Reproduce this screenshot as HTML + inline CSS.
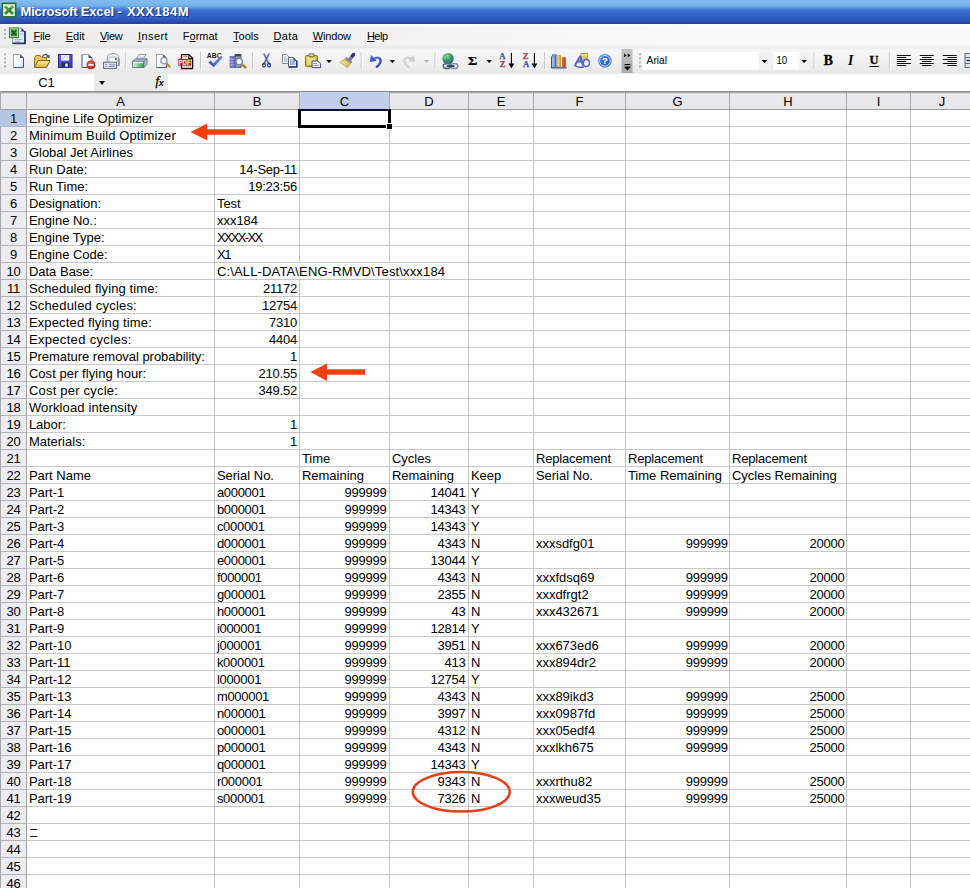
<!DOCTYPE html>
<html lang="en"><head><meta charset="utf-8"><title>Microsoft Excel - XXX184M</title>
<style>

html,body{margin:0;padding:0;}
body{width:970px;height:888px;overflow:hidden;background:#fff;position:relative;
  font-family:"Liberation Sans",sans-serif;color:#000;}
.abs{position:absolute;}
#title{left:0;top:0;width:970px;height:24px;
  background:linear-gradient(to bottom,#80bcee 0px,#78b4ec 5px,#669fe5 7px,#4a82d8 9px,#3a6ccc 11px,#3466c8 13px,#3262c4 17px,#2b52b4 21px,#2646a8 23px,#2442a2 24px);}
#title .t{left:20.5px;top:3px;font-weight:bold;font-size:13px;line-height:17px;color:#fff;white-space:nowrap;
  text-shadow:1px 1px 1px rgba(10,30,100,.7);}
#menu{left:0;top:24px;width:970px;height:24px;background:linear-gradient(to bottom,rgba(255,255,255,.7) 0,rgba(255,255,255,.5) 2px,rgba(255,255,255,0) 4px,rgba(0,0,0,0) 20px,rgba(0,0,0,.035) 23px,rgba(0,0,0,.035) 24px),linear-gradient(to right,#ededed 0,#f0f0f0 300px,#f8f8f8 600px,#fafafa 100%);}
#menu span{position:absolute;top:6px;font-size:11px;line-height:13px;white-space:nowrap;color:#000;}
#menu u{text-decoration:underline;text-underline-offset:1px;}
#tool{left:0;top:48px;width:970px;height:25px;background:linear-gradient(to bottom,#eeeeee 0,#f6f6f6 2px,#f3f3f3 40%,#ececec 80%,#e7e7e7 100%);}
#fbar{left:0;top:73px;width:970px;height:18px;background:#fff;}
#grid{left:0;top:91px;width:970px;height:797px;background:#fff;overflow:hidden;}
.c{position:absolute;height:17px;line-height:17px;font-size:13px;white-space:nowrap;}
.l{text-align:left;}
.r{text-align:right;letter-spacing:-0.23px;}
.n{letter-spacing:-0.3px;}
.rh{position:absolute;left:0.5px;letter-spacing:-0.23px;width:26px;height:17px;line-height:17px;font-size:13px;text-align:center;}
.ch{position:absolute;top:2px;height:17px;line-height:17px;font-size:13px;text-align:center;}
.vl{position:absolute;width:1px;background:#c4c4c4;}

</style></head><body>
<div id="title" class="abs">
<svg class="abs" style="left:1px;top:2px" width="16" height="16" viewBox="0 0 16 16"><rect x="0.5" y="0.5" width="15" height="15.2" fill="#2f6f33"/><rect x="2.2" y="2.2" width="11.6" height="11.8" fill="#e9f4dc"/><path d="M4 4.4 L12 12 M12 4.2 L4 12" stroke="#2f8a30" stroke-width="2.6"/><path d="M4.4 4.2 L8 7.6 M11.6 4 L9.4 6.2" stroke="#5fb45a" stroke-width="1.2"/></svg>
<div class="abs t"><span style="letter-spacing:-.18px">Microsoft Excel</span> - <span style="letter-spacing:.5px;margin-left:1.5px">XXX184M</span></div>
</div>
<div id="menu" class="abs">
<div class="abs" style="left:4px;top:5px;width:2px;height:2px;background:#b4b4b4"></div>
<div class="abs" style="left:4px;top:9px;width:2px;height:2px;background:#b4b4b4"></div>
<div class="abs" style="left:4px;top:13px;width:2px;height:2px;background:#b4b4b4"></div>
<svg class="abs" style="left:8px;top:2px" width="19" height="19" viewBox="8 26 19 19"><path d="M12.5 28.2 H21.6 L25 31.6 V43.2 H12.5 Z" fill="#dfeafa" stroke="#8a98b4" stroke-width="1"/><path d="M25 31 V43.4 H12.6" fill="none" stroke="#2c3a66" stroke-width="1.8"/><path d="M21.4 28 V31.8 H25.2 Z" fill="#2c3a66"/><path d="M19.6 31.5 H22.6 M19.6 34 H23 M15 39.6 H22.6 M15 41.2 H20" stroke="#9cb0d4" stroke-width=".9"/><rect x="9.4" y="28" width="9" height="9.6" fill="#d4efc8" stroke="#3c7a3a" stroke-width="1"/><rect x="10.6" y="29.2" width="6.6" height="7.2" fill="#58a852"/><path d="M11.4 30.4 L16.4 35.4 M16.4 30.2 L11.4 35.4" stroke="#16501a" stroke-width="1.5"/></svg>
<span style="left:33.4px;letter-spacing:-0.18px"><u>F</u>ile</span>
<span style="left:65.8px;letter-spacing:-0.06px"><u>E</u>dit</span>
<span style="left:100px;letter-spacing:-0.35px"><u>V</u>iew</span>
<span style="left:137.9px;letter-spacing:0.44px"><u>I</u>nsert</span>
<span style="left:182.8px;letter-spacing:-0.01px">F<u>o</u>rmat</span>
<span style="left:233.1px;letter-spacing:0.00px"><u>T</u>ools</span>
<span style="left:273.4px;letter-spacing:0.38px"><u>D</u>ata</span>
<span style="left:312.7px;letter-spacing:-0.15px"><u>W</u>indow</span>
<span style="left:366.9px;letter-spacing:-0.48px"><u>H</u>elp</span>
</div>
<div id="tool" class="abs"></div>
<svg class="abs" style="left:0;top:48px" width="970" height="26" viewBox="0 48 970 26" shape-rendering="auto">
<defs>
<linearGradient id="gpage" x1="0" y1="0" x2="1" y2="1"><stop offset="0" stop-color="#ffffff"/><stop offset="0.6" stop-color="#f4f8fd"/><stop offset="1" stop-color="#cfdcf0"/></linearGradient>
<linearGradient id="gfold" x1="0" y1="0" x2="0" y2="1"><stop offset="0" stop-color="#fdeea0"/><stop offset="1" stop-color="#e2ad33"/></linearGradient>
<linearGradient id="gsave" x1="0" y1="0" x2="1" y2="1"><stop offset="0" stop-color="#6668d0"/><stop offset="1" stop-color="#3c3ca6"/></linearGradient>
<radialGradient id="gred" cx="0.4" cy="0.35" r="0.7"><stop offset="0" stop-color="#f07050"/><stop offset="1" stop-color="#b02010"/></radialGradient>
<linearGradient id="ggreen" x1="0" y1="0" x2="1" y2="0"><stop offset="0" stop-color="#e4f2e6"/><stop offset="0.45" stop-color="#8ed096"/><stop offset="1" stop-color="#2e9a40"/></linearGradient>
<linearGradient id="gclip" x1="0" y1="0" x2="1" y2="1"><stop offset="0" stop-color="#f0e070"/><stop offset="0.5" stop-color="#d0b838"/><stop offset="1" stop-color="#9c8414"/></linearGradient>
<radialGradient id="gglobe" cx="0.35" cy="0.3" r="0.8"><stop offset="0" stop-color="#a8f090"/><stop offset="0.45" stop-color="#3aa070"/><stop offset="1" stop-color="#1c5c98"/></radialGradient>
<linearGradient id="gcheck" x1="1" y1="0" x2="0" y2="1"><stop offset="0" stop-color="#8098e0"/><stop offset="1" stop-color="#2846b0"/></linearGradient>
<linearGradient id="gbar1" x1="0" y1="0" x2="1" y2="0"><stop offset="0" stop-color="#b8d8f8"/><stop offset="1" stop-color="#2c54a8"/></linearGradient>
<linearGradient id="gbar2" x1="0" y1="0" x2="1" y2="0"><stop offset="0" stop-color="#fbe870"/><stop offset="1" stop-color="#c89018"/></linearGradient>
<linearGradient id="gbar3" x1="0" y1="0" x2="1" y2="0"><stop offset="0" stop-color="#f88050"/><stop offset="1" stop-color="#c02808"/></linearGradient>
<radialGradient id="ghelp" cx="0.4" cy="0.35" r="0.75"><stop offset="0" stop-color="#4a80e8"/><stop offset="1" stop-color="#1c44a8"/></radialGradient>
<linearGradient id="govf" x1="0" y1="0" x2="0" y2="1"><stop offset="0" stop-color="#c4c4c4"/><stop offset="1" stop-color="#a8a8a8"/></linearGradient>
<linearGradient id="gbrush" x1="0" y1="0" x2="1" y2="1"><stop offset="0" stop-color="#fbf4b4"/><stop offset="1" stop-color="#c8b044"/></linearGradient>
<linearGradient id="gbook" x1="0" y1="0" x2="1" y2="0"><stop offset="0" stop-color="#9090e0"/><stop offset="1" stop-color="#5858b8"/></linearGradient>
<linearGradient id="gundo" x1="0" y1="0" x2="1" y2="1"><stop offset="0" stop-color="#5a80e8"/><stop offset="1" stop-color="#2a3ca8"/></linearGradient>
</defs>
<rect x="4" y="53.5" width="2" height="2" fill="#b2b2b2"/>
<rect x="5.5" y="55" width="1" height="1" fill="#fff" opacity=".8"/>
<rect x="4" y="57.5" width="2" height="2" fill="#b2b2b2"/>
<rect x="5.5" y="59" width="1" height="1" fill="#fff" opacity=".8"/>
<rect x="4" y="61.5" width="2" height="2" fill="#b2b2b2"/>
<rect x="5.5" y="63" width="1" height="1" fill="#fff" opacity=".8"/>
<rect x="4" y="65.5" width="2" height="2" fill="#b2b2b2"/>
<rect x="5.5" y="67" width="1" height="1" fill="#fff" opacity=".8"/>
<path d="M13.5 54.5 H20 L23.5 58 V67.5 H13.5 Z" fill="url(#gpage)" stroke="#4a586e" stroke-width="1" stroke-linejoin="round"/>
<path d="M13.5 54.5 H20" stroke="#9aa4b4" stroke-width="1"/>
<path d="M13.5 54.5 V67.5" stroke="#9aa4b4" stroke-width="1"/>
<path d="M20 54.5 V58 H23.5 Z" fill="#4a586e"/>
<path d="M34.5 57.5 L36 55.5 H40 L41.5 57.5 H46.5 V67 H34.5 Z" fill="#e6c45a" stroke="#96761e" stroke-width="1" stroke-linejoin="round"/>
<path d="M34.5 67.5 L38 60.5 H50 L46.5 67.5 Z" fill="url(#gfold)" stroke="#86661a" stroke-width="1" stroke-linejoin="round"/>
<path d="M42.5 57 C43 54.2 46.5 53.6 48 56" fill="none" stroke="#4c525c" stroke-width="1.3"/>
<path d="M49.6 54.4 L49.4 58.4 L45.8 57 Z" fill="#4c525c"/>
<rect x="58.5" y="54.5" width="13.5" height="13" fill="url(#gsave)" stroke="#2a2a84" stroke-width="1"/>
<rect x="61" y="55" width="8.2" height="5.6" fill="#eef0ff"/>
<path d="M62 59.5 L66.5 55.5" stroke="#c8ccf0" stroke-width="1.5"/>
<rect x="61.5" y="62.5" width="7.5" height="5" fill="#262670"/>
<rect x="65.3" y="63.5" width="2.4" height="3.2" fill="#f4f4ff"/>
<path d="M82 54.5 H88.5 L92 58 V67.5 H82 Z" fill="url(#gpage)" stroke="#4a586e" stroke-width="1" stroke-linejoin="round"/>
<path d="M82 54.5 H88.5" stroke="#9aa4b4" stroke-width="1"/>
<path d="M82 54.5 V67.5" stroke="#9aa4b4" stroke-width="1"/>
<path d="M88.5 54.5 V58 H92 Z" fill="#4a586e"/>
<circle cx="91" cy="64.9" r="4.1" fill="url(#gred)" stroke="#a02818" stroke-width=".6"/>
<rect x="88.4" y="64" width="5.2" height="1.8" rx=".5" fill="#fff"/>
<path d="M107.2 65.5 V58.4 Q107.2 53.6 113 53.6 Q118.8 53.6 118.8 58.4 V65.5 Z" fill="#f6f8fb" stroke="#8e9ab0" stroke-width="1" stroke-linejoin="round"/>
<path d="M109 62 V57.2 H117 V62" fill="#fff" stroke="#a0aabc" stroke-width=".9"/>
<rect x="115" y="58" width="1.8" height="2" fill="#56667e"/>
<path d="M118.9 58.6 V65.8" stroke="#66748c" stroke-width="1.1"/>
<rect x="103.6" y="62.2" width="12.8" height="6.2" fill="#eef2f8" stroke="#5a6880" stroke-width="1"/>
<path d="M105 64.3 H107.4 M105 66.4 H107.4 M108.8 64.3 H115 M108.8 66.4 H115" stroke="#8290a8" stroke-width="1.1"/>
<rect x="124.8" y="52" width="1" height="17" fill="#c6c6c6"/>
<rect x="125.8" y="53" width="1" height="17" fill="#fff" opacity=".7"/>
<path d="M136.4 59 L139 54.6 H146 L143.4 59 Z" fill="#fdfeff" stroke="#7a889c" stroke-width=".9" stroke-linejoin="round"/>
<path d="M139.2 56.6 H144 M138.4 57.8 H143" stroke="#c0c8d6" stroke-width=".7"/>
<path d="M132.6 61.2 L135.8 58.8 H147 V64.4 L144 67.4 H132.6 Z" fill="#b4c0d0" stroke="#66748a" stroke-width=".9" stroke-linejoin="round"/>
<rect x="132.6" y="61.2" width="11.4" height="6.2" fill="url(#ggreen)" stroke="#66748a" stroke-width=".9"/>
<path d="M133.4 62.5 H143.2" stroke="#ffffff" stroke-width="1.3"/>
<path d="M144 61.2 L147 58.8" stroke="#66748a" stroke-width=".9"/>
<path d="M156.5 54.5 H163 L166.5 58 V67.5 H156.5 Z" fill="url(#gpage)" stroke="#4a586e" stroke-width="1" stroke-linejoin="round"/>
<path d="M156.5 54.5 H163" stroke="#9aa4b4" stroke-width="1"/>
<path d="M156.5 54.5 V67.5" stroke="#9aa4b4" stroke-width="1"/>
<path d="M163 54.5 V58 H166.5 Z" fill="#4a586e"/>
<path d="M166.4 63.4 L169.6 66.6" stroke="#b09a3a" stroke-width="2.2" stroke-linecap="round"/>
<circle cx="164" cy="60.8" r="3.1" fill="#eef3fa" stroke="#8e9aac" stroke-width="1.3"/>
<path d="M162.4 60.2 A1.8 1.8 0 0 1 164.4 59" fill="none" stroke="#fff" stroke-width="1"/>
<path d="M181.5 54.6 H189 L192.6 58.2 V68.5 H181.5 Z" fill="#fff" stroke="#141414" stroke-width="1.3" stroke-linejoin="round"/>
<path d="M188.8 54.6 V58.4 H192.6" fill="none" stroke="#141414" stroke-width="1.1"/>
<rect x="183.2" y="55.8" width="4.4" height="1.5" fill="#ee8080"/>
<rect x="183" y="66.4" width="8" height="1.2" fill="#ee9090"/>
<path d="M183.6 67 H190.4" stroke="#fff" stroke-width=".7" stroke-dasharray="1.2 .6"/>
<rect x="178" y="58.8" width="13.2" height="7" rx=".8" fill="#d81e1e"/>
<text x="178.6" y="64.7" font-family="Liberation Sans, sans-serif" font-weight="bold" font-size="6.6" fill="#fff" textLength="12" lengthAdjust="spacingAndGlyphs">PDF</text>
<rect x="200" y="52" width="1" height="17" fill="#c6c6c6"/>
<rect x="201" y="53" width="1" height="17" fill="#fff" opacity=".7"/>
<text x="206.8" y="57.8" font-family="Liberation Sans, sans-serif" font-weight="bold" font-size="6.5" fill="#202020" textLength="14.8" lengthAdjust="spacingAndGlyphs">ABC</text>
<path d="M208.4 62.6 L210.8 60.6 L213.4 63.6 L220.6 55.8 L222.8 57.4 L213.6 67.2 Z" fill="url(#gcheck)"/>
<rect x="235" y="54.5" width="6" height="13" fill="#8e98b0" stroke="#4a5264" stroke-width=".8"/>
<rect x="235" y="54.2" width="6" height="2" fill="#3c4454"/>
<rect x="230" y="56.5" width="5" height="11" fill="url(#gbook)" stroke="#4a4aa0" stroke-width=".6"/>
<path d="M230.3 59.2 H234.7 M230.3 62 H234.7 M230.3 64.8 H234.7" stroke="#b8b8f0" stroke-width=".8"/>
<path d="M241.4 64 L245.4 67.3" stroke="#a08c30" stroke-width="2.6" stroke-linecap="round"/>
<circle cx="239.2" cy="61.6" r="3.2" fill="#f0f4fa" stroke="#7c8898" stroke-width="1.3"/>
<rect x="252" y="52" width="1" height="17" fill="#c6c6c6"/>
<rect x="253" y="53" width="1" height="17" fill="#fff" opacity=".7"/>
<path d="M264 54.2 L268.4 62.6 M268.8 54.2 L264.6 62.6" stroke="#5868ac" stroke-width="1.6" stroke-linecap="round"/>
<ellipse cx="264" cy="65" rx="2.1" ry="2.5" fill="#2c3c9e"/>
<ellipse cx="269" cy="65" rx="2.1" ry="2.5" fill="#2c3c9e"/>
<circle cx="264.1" cy="65.4" r=".8" fill="#fff"/><circle cx="268.9" cy="65.4" r=".8" fill="#fff"/>
<path d="M282.5 54.5 H286.4 L289 57.1 V63.5 H282.5 Z" fill="#fbfcfe" stroke="#7a88a4" stroke-width="1" stroke-linejoin="round"/>
<path d="M284 57 H286.5 M284 59 H287.5 M284 61 H287.5" stroke="#7c90c0" stroke-width=".9"/>
<path d="M288.5 57.5 H293.4 L296.6 60.7 V66.6 H288.5 Z" fill="#fafcff" stroke="#5a6a90" stroke-width="1" stroke-linejoin="round"/>
<path d="M296.8 60.4 V66.9 H288.6" fill="none" stroke="#2a3a68" stroke-width="1.5"/>
<path d="M293.3 57.5 V60.8 H296.6 Z" fill="#36466e"/>
<path d="M290 60 H292.4 M290 62 H295.2 M290 64 H295.2" stroke="#4a6ab8" stroke-width="1"/>
<rect x="305.5" y="55.6" width="12" height="11" rx="1" fill="url(#gclip)" stroke="#8a7812" stroke-width="1"/>
<rect x="307.4" y="57.6" width="8.2" height="7.4" fill="#f2e9a4" opacity=".75"/>
<rect x="309" y="53.8" width="5" height="3" rx=".8" fill="#d8d4c0" stroke="#5c5a48" stroke-width=".9"/>
<path d="M312 61 H317.8 L320.6 63.8 V67.6 H312 Z" fill="#f6f9ff" stroke="#3a4864" stroke-width="1" stroke-linejoin="round"/>
<path d="M313.3 63.4 H317 M313.3 65.4 H319.2" stroke="#6a86c0" stroke-width=".9"/>
<path d="M326.2 60 L331.8 60 L329 63 Z" fill="#000"/>
<path d="M353.4 54.6 L349.4 60" stroke="#7a7ab0" stroke-width="3.6" stroke-linecap="round"/>
<path d="M353.6 54.4 L352.4 56" stroke="#3c3c5c" stroke-width="3.2" stroke-linecap="round"/>
<path d="M346.2 57.4 L352 61.8 L350.6 63.6 L344.8 59.2 Z" fill="#8c8c9c" stroke="#5c5c70" stroke-width=".5"/>
<path d="M344.8 59.2 L350.6 63.6 L347.4 67.8 L339.8 62.2 Z" fill="url(#gbrush)" stroke="#a89838" stroke-width=".6"/>
<path d="M343 61.6 L346.2 59.8 M345 63.4 L348.2 61.8 M346.8 65.2 L349.8 63" stroke="#c8b850" stroke-width=".6"/>
<rect x="360.7" y="52" width="1" height="17" fill="#c6c6c6"/>
<rect x="361.7" y="53" width="1" height="17" fill="#fff" opacity=".7"/>
<path d="M374 59 C378.5 55.5 382 59.5 380 63 C379.2 64.6 378.2 65.8 376.8 66.8" fill="none" stroke="url(#gundo)" stroke-width="2.3" stroke-linecap="round"/>
<path d="M369.8 62 L371 55 L376.8 61 Z" fill="#3c5cd0"/>
<path d="M389.6 60 L395.2 60 L392.4 63 Z" fill="#000"/>
<path d="M411 59 C406.5 55.5 403 59.5 405 63 C405.8 64.6 406.8 65.8 408.2 66.8" fill="none" stroke="#d0d0d0" stroke-width="2.3" stroke-linecap="round"/>
<path d="M415.2 62 L414 55 L408.2 61 Z" fill="#cecece"/>
<path d="M423.7 60 L429.3 60 L426.5 63 Z" fill="#b4b4b4"/>
<rect x="434.5" y="52" width="1" height="17" fill="#c6c6c6"/>
<rect x="435.5" y="53" width="1" height="17" fill="#fff" opacity=".7"/>
<circle cx="448" cy="58.6" r="5.7" fill="url(#gglobe)"/>
<path d="M445 55 C447 56 447.5 58.5 446 60.5 C445 62 446.4 63.2 448.4 63" fill="none" stroke="#2a7c8c" stroke-width="1" opacity=".7"/>
<rect x="443.3" y="63.8" width="7.4" height="4.6" rx="2.3" fill="none" stroke="#5a6882" stroke-width="1.6"/>
<rect x="450.6" y="63.8" width="7.2" height="4.6" rx="2.3" fill="none" stroke="#8490a8" stroke-width="1.6"/>
<path d="M446.8 66.1 H454.4" stroke="#26344e" stroke-width="1.7"/>
<text x="467.7" y="64.6" font-family="Liberation Serif, serif" font-weight="bold" font-size="12.4" fill="#000" stroke="#000" stroke-width=".2" textLength="9.6" lengthAdjust="spacingAndGlyphs">Σ</text>
<path d="M486.4 60 L492 60 L489.2 63 Z" fill="#000"/>
<text x="499.2" y="59.4" font-family="Liberation Serif, serif" font-weight="bold" font-size="8.6" fill="#3c54a4" stroke="#3c54a4" stroke-width=".25">A</text>
<text x="499.8" y="67.4" font-family="Liberation Serif, serif" font-weight="bold" font-size="8.6" fill="#94484a" stroke="#94484a" stroke-width=".25">Z</text>
<path d="M511.4 53 V66" stroke="#000" stroke-width="1.1"/>
<path d="M508.4 63.4 H514.4 L511.4 68.2 Z" fill="#000"/>
<text x="522.8" y="59.4" font-family="Liberation Serif, serif" font-weight="bold" font-size="8.6" fill="#94484a" stroke="#94484a" stroke-width=".25">Z</text>
<text x="523" y="67.4" font-family="Liberation Serif, serif" font-weight="bold" font-size="8.6" fill="#3c54a4" stroke="#3c54a4" stroke-width=".25">A</text>
<path d="M534.4 53 V66" stroke="#000" stroke-width="1.1"/>
<path d="M531.4 63.4 H537.4 L534.4 68.2 Z" fill="#000"/>
<rect x="544" y="52" width="1" height="17" fill="#c6c6c6"/>
<rect x="545" y="53" width="1" height="17" fill="#fff" opacity=".7"/>
<path d="M551.6 57 V67.8 H566.6" fill="none" stroke="#34447e" stroke-width="1.1"/>
<path d="M551.6 57 L553.4 54.4" stroke="#34447e" stroke-width=".9"/>
<path d="M552 68.6 H566" stroke="#8a94b4" stroke-width=".8"/>
<rect x="553" y="54.6" width="3.2" height="12.4" fill="url(#gbar1)" stroke="#3c5ca4" stroke-width=".4"/>
<rect x="557.6" y="55.4" width="3.2" height="11.6" fill="url(#gbar2)" stroke="#a88420" stroke-width=".4"/>
<rect x="562.2" y="57.6" width="3.4" height="9.4" fill="url(#gbar3)" stroke="#a83010" stroke-width=".4"/>
<rect x="581" y="53.6" width="6.6" height="6.2" fill="#dccc54" stroke="#948828" stroke-width=".7"/>
<path d="M581 55.2 H587.6" stroke="#f6eea0" stroke-width="1"/>
<path d="M575.4 64.6 L580.2 56.4 L582.8 64.6 M577.4 61.6 H582" fill="none" stroke="#5862c2" stroke-width="2" stroke-linejoin="round" stroke-linecap="round"/>
<ellipse cx="586.4" cy="63" rx="3" ry="3.4" fill="#fafbff" stroke="#5a66ba" stroke-width="1.5"/>
<path d="M574.2 65.4 C577 67.2 581 67.6 584 66.8" fill="none" stroke="#5a66ba" stroke-width="1.4"/>
<circle cx="604.9" cy="60.8" r="6.7" fill="url(#ghelp)" stroke="#9cbcf0" stroke-width=".8"/>
<circle cx="604.9" cy="60.8" r="5.3" fill="none" stroke="#e8f0ff" stroke-width=".9"/>
<text x="604.9" y="64.2" text-anchor="middle" font-family="Liberation Sans, sans-serif" font-weight="bold" font-size="9.6" fill="#fff">?</text>
<rect x="621.5" y="49" width="11" height="24" fill="url(#govf)"/>
<path d="M624.2 53.6 L626.6 55.4 L624.2 57.2 Z M627.8 53.6 L630.2 55.4 L627.8 57.2 Z" fill="#000"/>
<rect x="624.6" y="64" width="5.8" height="1.1" fill="#000"/>
<path d="M624.2 66.8 H630.8 L627.5 70.4 Z" fill="#000"/>
<path d="M624.8 67.6 H631.4 L628.1 71.2 Z" fill="#fff" opacity=".5"/>
<path d="M624.2 66.8 H630.8 L627.5 70.4 Z" fill="#000"/>
<rect x="639" y="53.5" width="2" height="2" fill="#b2b2b2"/>
<rect x="640.5" y="55" width="1" height="1" fill="#fff" opacity=".8"/>
<rect x="639" y="57.5" width="2" height="2" fill="#b2b2b2"/>
<rect x="640.5" y="59" width="1" height="1" fill="#fff" opacity=".8"/>
<rect x="639" y="61.5" width="2" height="2" fill="#b2b2b2"/>
<rect x="640.5" y="63" width="1" height="1" fill="#fff" opacity=".8"/>
<rect x="639" y="65.5" width="2" height="2" fill="#b2b2b2"/>
<rect x="640.5" y="67" width="1" height="1" fill="#fff" opacity=".8"/>
<rect x="643" y="52" width="116" height="18" fill="#fff"/>
<rect x="759" y="52" width="12" height="18" fill="#f1f1f1"/>
<text x="646.6" y="63.6" font-family="Liberation Sans, sans-serif" font-size="11" fill="#000" textLength="20.4" lengthAdjust="spacingAndGlyphs">Arial</text>
<path d="M761.6 60 L767.2 60 L764.4 63 Z" fill="#000"/>
<rect x="773.5" y="52" width="26" height="18" fill="#fff"/>
<rect x="799.5" y="52" width="11" height="18" fill="#f1f1f1"/>
<text x="776.4" y="63.6" font-family="Liberation Sans, sans-serif" font-size="11" fill="#000" textLength="10.8" lengthAdjust="spacingAndGlyphs">10</text>
<path d="M801.4 60 L807 60 L804.2 63 Z" fill="#000"/>
<rect x="813.5" y="52" width="1" height="17" fill="#c6c6c6"/>
<rect x="814.5" y="53" width="1" height="17" fill="#fff" opacity=".7"/>
<text x="823.8" y="64.7" font-family="Liberation Serif, serif" font-weight="bold" font-size="13.6" fill="#000" stroke="#000" stroke-width=".3" textLength="9.2" lengthAdjust="spacingAndGlyphs">B</text>
<text x="848" y="64.7" font-family="Liberation Serif, serif" font-weight="bold" font-style="italic" font-size="13.6" fill="#000">I</text>
<text x="869.6" y="64.2" font-family="Liberation Serif, serif" font-weight="bold" font-size="12.5" fill="#000" stroke="#000" stroke-width=".3">U</text>
<rect x="869.6" y="66" width="9.6" height="1" fill="#000"/>
<rect x="888.8" y="52" width="1" height="17" fill="#c6c6c6"/>
<rect x="889.8" y="53" width="1" height="17" fill="#fff" opacity=".7"/>
<rect x="896.8" y="55" width="14" height="1" fill="#111"/>
<rect x="896.8" y="57" width="9.4" height="1" fill="#111"/>
<rect x="896.8" y="59" width="14" height="1" fill="#111"/>
<rect x="896.8" y="61" width="9.4" height="1" fill="#111"/>
<rect x="896.8" y="63" width="14" height="1" fill="#111"/>
<rect x="896.8" y="65" width="9.4" height="1" fill="#111"/>
<rect x="919.8" y="55" width="14" height="1" fill="#111"/>
<rect x="922.1" y="57" width="9.4" height="1" fill="#111"/>
<rect x="919.8" y="59" width="14" height="1" fill="#111"/>
<rect x="922.1" y="61" width="9.4" height="1" fill="#111"/>
<rect x="919.8" y="63" width="14" height="1" fill="#111"/>
<rect x="922.1" y="65" width="9.4" height="1" fill="#111"/>
<rect x="942.8" y="55" width="14" height="1" fill="#111"/>
<rect x="947.4" y="57" width="9.4" height="1" fill="#111"/>
<rect x="942.8" y="59" width="14" height="1" fill="#111"/>
<rect x="947.4" y="61" width="9.4" height="1" fill="#111"/>
<rect x="942.8" y="63" width="14" height="1" fill="#111"/>
<rect x="947.4" y="65" width="9.4" height="1" fill="#111"/>
<rect x="965" y="53.5" width="8" height="14" fill="#dce8f8" stroke="#5c6c8c" stroke-width="1"/>
<path d="M965 57.5 H973 M965 63.5 H973" stroke="#5c6c8c" stroke-width="1"/>
<path d="M966.5 60.5 H973" stroke="#222" stroke-width="1.2"/>
</svg>
<div id="fbar" class="abs">
<div class="abs" style="left:0;top:0;width:970px;height:1px;background:#ececec"></div>
<div class="abs" style="left:0;top:1px;width:93px;height:17px;line-height:17px;font-size:13px;text-align:center;">C1</div>
<div class="abs" style="left:93.5px;top:0;width:74.3px;height:18px;background:#ebebeb"></div>
<div class="abs" style="left:98.8px;top:8px;width:0;height:0;border-left:3.5px solid transparent;border-right:3.5px solid transparent;border-top:4px solid #000"></div>
<div class="abs" style="left:155.6px;top:0;font-family:'Liberation Serif',serif;font-style:italic;font-weight:normal;font-size:12.5px;line-height:17px;white-space:nowrap;-webkit-text-stroke:.3px #000">f<span style="font-size:9px;font-weight:bold;position:relative;left:-0.4px;top:0.6px;font-family:'Liberation Sans',sans-serif;-webkit-text-stroke:0">x</span></div>
</div>
<div id="grid" class="abs">
<div class="abs" style="left:0;top:0;width:970px;height:19px;background:#e8e8ea;box-sizing:border-box;border-bottom:1px solid #a0a0a0"></div>
<div class="abs" style="left:0;top:0;width:970px;height:1px;background:#8c8c8c"></div>
<div class="abs" style="left:0;top:1px;width:970px;height:1px;background:#a8a8a8"></div>
<div class="abs" style="left:0;top:2px;width:970px;height:1px;background:#dcdcde"></div>
<div class="abs" style="left:0;top:19px;width:27px;height:780px;background:#ececf1;border-right:1px solid #a4a4a4;box-sizing:border-box;background-image:repeating-linear-gradient(to bottom,transparent 0,transparent 16px,#b4b4b4 16px,#b4b4b4 17px)"></div>
<div class="abs" style="left:0;top:0;width:1px;height:800px;background:#a8a8ac"></div>
<div class="abs" style="left:27px;top:19px;width:943px;height:780px;background-image:repeating-linear-gradient(to bottom,transparent 0,transparent 16px,#c8c8c8 16px,#c8c8c8 17px)"></div>
<div class="vl" style="left:214px;top:19px;height:780px"></div>
<div class="vl" style="left:214px;top:1px;height:17px;background:#a8a8a8"></div>
<div class="vl" style="left:299px;top:19px;height:780px"></div>
<div class="vl" style="left:299px;top:1px;height:17px;background:#a8a8a8"></div>
<div class="vl" style="left:389px;top:19px;height:780px"></div>
<div class="vl" style="left:389px;top:1px;height:17px;background:#a8a8a8"></div>
<div class="vl" style="left:468px;top:19px;height:780px"></div>
<div class="vl" style="left:468px;top:1px;height:17px;background:#a8a8a8"></div>
<div class="vl" style="left:533px;top:19px;height:780px"></div>
<div class="vl" style="left:533px;top:1px;height:17px;background:#a8a8a8"></div>
<div class="vl" style="left:625px;top:19px;height:780px"></div>
<div class="vl" style="left:625px;top:1px;height:17px;background:#a8a8a8"></div>
<div class="vl" style="left:729px;top:19px;height:780px"></div>
<div class="vl" style="left:729px;top:1px;height:17px;background:#a8a8a8"></div>
<div class="vl" style="left:846px;top:19px;height:780px"></div>
<div class="vl" style="left:846px;top:1px;height:17px;background:#a8a8a8"></div>
<div class="vl" style="left:910px;top:19px;height:780px"></div>
<div class="vl" style="left:910px;top:1px;height:17px;background:#a8a8a8"></div>
<div class="vl" style="left:26px;top:1px;height:17px;background:#a8a8a8"></div>
<div class="abs" style="left:300px;top:1px;width:89px;height:17px;background:linear-gradient(to bottom,#bfd0e8,#c3ccef)"></div>
<div class="abs" style="left:0;top:19px;width:26px;height:16px;background:#b6c6e2"></div>
<div class="abs" style="left:299px;top:172px;width:1px;height:16px;background:#fff"></div>
<div class="abs" style="left:389px;top:172px;width:1px;height:16px;background:#fff"></div>
<div class="ch" style="left:27px;width:187px">A</div>
<div class="ch" style="left:215px;width:84px">B</div>
<div class="ch" style="left:300px;width:89px">C</div>
<div class="ch" style="left:390px;width:78px">D</div>
<div class="ch" style="left:469px;width:64px">E</div>
<div class="ch" style="left:534px;width:91px">F</div>
<div class="ch" style="left:626px;width:103px">G</div>
<div class="ch" style="left:730px;width:116px">H</div>
<div class="ch" style="left:847px;width:63px">I</div>
<div class="ch" style="left:911px;width:62px">J</div>
<div class="rh" style="top:19px">1</div>
<div class="rh" style="top:36px">2</div>
<div class="rh" style="top:53px">3</div>
<div class="rh" style="top:70px">4</div>
<div class="rh" style="top:87px">5</div>
<div class="rh" style="top:104px">6</div>
<div class="rh" style="top:121px">7</div>
<div class="rh" style="top:138px">8</div>
<div class="rh" style="top:155px">9</div>
<div class="rh" style="top:172px">10</div>
<div class="rh" style="top:189px">11</div>
<div class="rh" style="top:206px">12</div>
<div class="rh" style="top:223px">13</div>
<div class="rh" style="top:240px">14</div>
<div class="rh" style="top:257px">15</div>
<div class="rh" style="top:274px">16</div>
<div class="rh" style="top:291px">17</div>
<div class="rh" style="top:308px">18</div>
<div class="rh" style="top:325px">19</div>
<div class="rh" style="top:342px">20</div>
<div class="rh" style="top:359px">21</div>
<div class="rh" style="top:376px">22</div>
<div class="rh" style="top:393px">23</div>
<div class="rh" style="top:410px">24</div>
<div class="rh" style="top:427px">25</div>
<div class="rh" style="top:444px">26</div>
<div class="rh" style="top:461px">27</div>
<div class="rh" style="top:478px">28</div>
<div class="rh" style="top:495px">29</div>
<div class="rh" style="top:512px">30</div>
<div class="rh" style="top:529px">31</div>
<div class="rh" style="top:546px">32</div>
<div class="rh" style="top:563px">33</div>
<div class="rh" style="top:580px">34</div>
<div class="rh" style="top:597px">35</div>
<div class="rh" style="top:614px">36</div>
<div class="rh" style="top:631px">37</div>
<div class="rh" style="top:648px">38</div>
<div class="rh" style="top:665px">39</div>
<div class="rh" style="top:682px">40</div>
<div class="rh" style="top:699px">41</div>
<div class="rh" style="top:716px">42</div>
<div class="rh" style="top:733px">43</div>
<div class="rh" style="top:750px">44</div>
<div class="rh" style="top:767px">45</div>
<div class="rh" style="top:784px">46</div>
<div class="c l" style="left:28.9px;top:19px">Engine Life Optimizer</div>
<div class="c l" style="left:28.9px;top:36px;letter-spacing:0.11px">Minimum Build Optimizer</div>
<div class="c l" style="left:28.9px;top:53px">Global Jet Airlines</div>
<div class="c l" style="left:28.9px;top:70px">Run Date:</div>
<div class="c r" style="left:215px;top:70px;width:82px">14-Sep-11</div>
<div class="c l" style="left:28.9px;top:87px">Run Time:</div>
<div class="c r" style="left:215px;top:87px;width:82px">19:23:56</div>
<div class="c l" style="left:28.9px;top:104px">Designation:</div>
<div class="c l" style="left:216.9px;top:104px">Test</div>
<div class="c l" style="left:28.9px;top:121px">Engine No.:</div>
<div class="c l" style="left:216.9px;top:121px">xxx184</div>
<div class="c l" style="left:28.9px;top:138px">Engine Type:</div>
<div class="c l" style="left:216.9px;top:138px;letter-spacing:-1.68px">XXXX-XX</div>
<div class="c l" style="left:28.9px;top:155px">Engine Code:</div>
<div class="c l" style="left:216.9px;top:155px;letter-spacing:-1.4px">X1</div>
<div class="c l" style="left:28.9px;top:172px">Data Base:</div>
<div class="c l" style="left:216.9px;top:172px;letter-spacing:0.15px">C:\ALL-DATA\ENG-RMVD\Test\xxx184</div>
<div class="c l" style="left:28.9px;top:189px;letter-spacing:0.095px">Scheduled flying time:</div>
<div class="c r" style="left:215px;top:189px;width:82px">21172</div>
<div class="c l" style="left:28.9px;top:206px;letter-spacing:0.19px">Scheduled cycles:</div>
<div class="c r" style="left:215px;top:206px;width:82px">12754</div>
<div class="c l" style="left:28.9px;top:223px;letter-spacing:0.15px">Expected flying time:</div>
<div class="c r" style="left:215px;top:223px;width:82px">7310</div>
<div class="c l" style="left:28.9px;top:240px;letter-spacing:0.33px">Expected cycles:</div>
<div class="c r" style="left:215px;top:240px;width:82px">4404</div>
<div class="c l" style="left:28.9px;top:257px;letter-spacing:-0.035px">Premature removal probability:</div>
<div class="c r" style="left:215px;top:257px;width:82px">1</div>
<div class="c l" style="left:28.9px;top:274px;letter-spacing:0.05px">Cost per flying hour:</div>
<div class="c r" style="left:215px;top:274px;width:82px">210.55</div>
<div class="c l" style="left:28.9px;top:291px;letter-spacing:0.21px">Cost per cycle:</div>
<div class="c r" style="left:215px;top:291px;width:82px">349.52</div>
<div class="c l" style="left:28.9px;top:308px;letter-spacing:0.14px">Workload intensity</div>
<div class="c l" style="left:28.9px;top:325px">Labor:</div>
<div class="c r" style="left:215px;top:325px;width:82px">1</div>
<div class="c l" style="left:28.9px;top:342px">Materials:</div>
<div class="c r" style="left:215px;top:342px;width:82px">1</div>
<div class="c l" style="left:301.9px;top:359px">Time</div>
<div class="c l" style="left:391.9px;top:359px">Cycles</div>
<div class="c l" style="left:535.9px;top:359px;letter-spacing:-0.15px">Replacement</div>
<div class="c l" style="left:627.9px;top:359px;letter-spacing:-0.15px">Replacement</div>
<div class="c l" style="left:731.9px;top:359px;letter-spacing:-0.15px">Replacement</div>
<div class="c l" style="left:28.9px;top:376px">Part Name</div>
<div class="c l" style="left:216.9px;top:376px">Serial No.</div>
<div class="c l" style="left:301.9px;top:376px">Remaining</div>
<div class="c l" style="left:391.9px;top:376px">Remaining</div>
<div class="c l" style="left:470.9px;top:376px">Keep</div>
<div class="c l" style="left:535.9px;top:376px">Serial No.</div>
<div class="c l" style="left:627.9px;top:376px">Time Remaining</div>
<div class="c l" style="left:731.9px;top:376px">Cycles Remaining</div>
<div class="c l" style="left:28.9px;top:393px">Part-1</div>
<div class="c l n" style="left:216.9px;top:393px">a000001</div>
<div class="c r" style="left:300px;top:393px;width:86.5px">999999</div>
<div class="c r" style="left:390px;top:393px;width:75.5px">14041</div>
<div class="c l" style="left:470.9px;top:393px">Y</div>
<div class="c l" style="left:28.9px;top:410px">Part-2</div>
<div class="c l n" style="left:216.9px;top:410px">b000001</div>
<div class="c r" style="left:300px;top:410px;width:86.5px">999999</div>
<div class="c r" style="left:390px;top:410px;width:75.5px">14343</div>
<div class="c l" style="left:470.9px;top:410px">Y</div>
<div class="c l" style="left:28.9px;top:427px">Part-3</div>
<div class="c l n" style="left:216.9px;top:427px">c000001</div>
<div class="c r" style="left:300px;top:427px;width:86.5px">999999</div>
<div class="c r" style="left:390px;top:427px;width:75.5px">14343</div>
<div class="c l" style="left:470.9px;top:427px">Y</div>
<div class="c l" style="left:28.9px;top:444px">Part-4</div>
<div class="c l n" style="left:216.9px;top:444px">d000001</div>
<div class="c r" style="left:300px;top:444px;width:86.5px">999999</div>
<div class="c r" style="left:390px;top:444px;width:75.5px">4343</div>
<div class="c l" style="left:470.9px;top:444px">N</div>
<div class="c l" style="left:535.9px;top:444px">xxxsdfg01</div>
<div class="c r" style="left:626px;top:444px;width:101.8px">999999</div>
<div class="c r" style="left:730px;top:444px;width:114.5px">20000</div>
<div class="c l" style="left:28.9px;top:461px">Part-5</div>
<div class="c l n" style="left:216.9px;top:461px">e000001</div>
<div class="c r" style="left:300px;top:461px;width:86.5px">999999</div>
<div class="c r" style="left:390px;top:461px;width:75.5px">13044</div>
<div class="c l" style="left:470.9px;top:461px">Y</div>
<div class="c l" style="left:28.9px;top:478px">Part-6</div>
<div class="c l n" style="left:216.9px;top:478px">f000001</div>
<div class="c r" style="left:300px;top:478px;width:86.5px">999999</div>
<div class="c r" style="left:390px;top:478px;width:75.5px">4343</div>
<div class="c l" style="left:470.9px;top:478px">N</div>
<div class="c l" style="left:535.9px;top:478px">xxxfdsq69</div>
<div class="c r" style="left:626px;top:478px;width:101.8px">999999</div>
<div class="c r" style="left:730px;top:478px;width:114.5px">20000</div>
<div class="c l" style="left:28.9px;top:495px">Part-7</div>
<div class="c l n" style="left:216.9px;top:495px">g000001</div>
<div class="c r" style="left:300px;top:495px;width:86.5px">999999</div>
<div class="c r" style="left:390px;top:495px;width:75.5px">2355</div>
<div class="c l" style="left:470.9px;top:495px">N</div>
<div class="c l" style="left:535.9px;top:495px">xxxdfrgt2</div>
<div class="c r" style="left:626px;top:495px;width:101.8px">999999</div>
<div class="c r" style="left:730px;top:495px;width:114.5px">20000</div>
<div class="c l" style="left:28.9px;top:512px">Part-8</div>
<div class="c l n" style="left:216.9px;top:512px">h000001</div>
<div class="c r" style="left:300px;top:512px;width:86.5px">999999</div>
<div class="c r" style="left:390px;top:512px;width:75.5px">43</div>
<div class="c l" style="left:470.9px;top:512px">N</div>
<div class="c l" style="left:535.9px;top:512px">xxx432671</div>
<div class="c r" style="left:626px;top:512px;width:101.8px">999999</div>
<div class="c r" style="left:730px;top:512px;width:114.5px">20000</div>
<div class="c l" style="left:28.9px;top:529px">Part-9</div>
<div class="c l n" style="left:216.9px;top:529px">i000001</div>
<div class="c r" style="left:300px;top:529px;width:86.5px">999999</div>
<div class="c r" style="left:390px;top:529px;width:75.5px">12814</div>
<div class="c l" style="left:470.9px;top:529px">Y</div>
<div class="c l" style="left:28.9px;top:546px">Part-10</div>
<div class="c l n" style="left:216.9px;top:546px">j000001</div>
<div class="c r" style="left:300px;top:546px;width:86.5px">999999</div>
<div class="c r" style="left:390px;top:546px;width:75.5px">3951</div>
<div class="c l" style="left:470.9px;top:546px">N</div>
<div class="c l" style="left:535.9px;top:546px">xxx673ed6</div>
<div class="c r" style="left:626px;top:546px;width:101.8px">999999</div>
<div class="c r" style="left:730px;top:546px;width:114.5px">20000</div>
<div class="c l" style="left:28.9px;top:563px">Part-11</div>
<div class="c l n" style="left:216.9px;top:563px">k000001</div>
<div class="c r" style="left:300px;top:563px;width:86.5px">999999</div>
<div class="c r" style="left:390px;top:563px;width:75.5px">413</div>
<div class="c l" style="left:470.9px;top:563px">N</div>
<div class="c l" style="left:535.9px;top:563px">xxx894dr2</div>
<div class="c r" style="left:626px;top:563px;width:101.8px">999999</div>
<div class="c r" style="left:730px;top:563px;width:114.5px">20000</div>
<div class="c l" style="left:28.9px;top:580px">Part-12</div>
<div class="c l n" style="left:216.9px;top:580px">l000001</div>
<div class="c r" style="left:300px;top:580px;width:86.5px">999999</div>
<div class="c r" style="left:390px;top:580px;width:75.5px">12754</div>
<div class="c l" style="left:470.9px;top:580px">Y</div>
<div class="c l" style="left:28.9px;top:597px">Part-13</div>
<div class="c l n" style="left:216.9px;top:597px">m000001</div>
<div class="c r" style="left:300px;top:597px;width:86.5px">999999</div>
<div class="c r" style="left:390px;top:597px;width:75.5px">4343</div>
<div class="c l" style="left:470.9px;top:597px">N</div>
<div class="c l" style="left:535.9px;top:597px">xxx89ikd3</div>
<div class="c r" style="left:626px;top:597px;width:101.8px">999999</div>
<div class="c r" style="left:730px;top:597px;width:114.5px">25000</div>
<div class="c l" style="left:28.9px;top:614px">Part-14</div>
<div class="c l n" style="left:216.9px;top:614px">n000001</div>
<div class="c r" style="left:300px;top:614px;width:86.5px">999999</div>
<div class="c r" style="left:390px;top:614px;width:75.5px">3997</div>
<div class="c l" style="left:470.9px;top:614px">N</div>
<div class="c l" style="left:535.9px;top:614px">xxx0987fd</div>
<div class="c r" style="left:626px;top:614px;width:101.8px">999999</div>
<div class="c r" style="left:730px;top:614px;width:114.5px">25000</div>
<div class="c l" style="left:28.9px;top:631px">Part-15</div>
<div class="c l n" style="left:216.9px;top:631px">o000001</div>
<div class="c r" style="left:300px;top:631px;width:86.5px">999999</div>
<div class="c r" style="left:390px;top:631px;width:75.5px">4312</div>
<div class="c l" style="left:470.9px;top:631px">N</div>
<div class="c l" style="left:535.9px;top:631px">xxx05edf4</div>
<div class="c r" style="left:626px;top:631px;width:101.8px">999999</div>
<div class="c r" style="left:730px;top:631px;width:114.5px">25000</div>
<div class="c l" style="left:28.9px;top:648px">Part-16</div>
<div class="c l n" style="left:216.9px;top:648px">p000001</div>
<div class="c r" style="left:300px;top:648px;width:86.5px">999999</div>
<div class="c r" style="left:390px;top:648px;width:75.5px">4343</div>
<div class="c l" style="left:470.9px;top:648px">N</div>
<div class="c l" style="left:535.9px;top:648px">xxxlkh675</div>
<div class="c r" style="left:626px;top:648px;width:101.8px">999999</div>
<div class="c r" style="left:730px;top:648px;width:114.5px">25000</div>
<div class="c l" style="left:28.9px;top:665px">Part-17</div>
<div class="c l n" style="left:216.9px;top:665px">q000001</div>
<div class="c r" style="left:300px;top:665px;width:86.5px">999999</div>
<div class="c r" style="left:390px;top:665px;width:75.5px">14343</div>
<div class="c l" style="left:470.9px;top:665px">Y</div>
<div class="c l" style="left:28.9px;top:682px">Part-18</div>
<div class="c l n" style="left:216.9px;top:682px">r000001</div>
<div class="c r" style="left:300px;top:682px;width:86.5px">999999</div>
<div class="c r" style="left:390px;top:682px;width:75.5px">9343</div>
<div class="c l" style="left:470.9px;top:682px">N</div>
<div class="c l" style="left:535.9px;top:682px">xxxrthu82</div>
<div class="c r" style="left:626px;top:682px;width:101.8px">999999</div>
<div class="c r" style="left:730px;top:682px;width:114.5px">25000</div>
<div class="c l" style="left:28.9px;top:699px">Part-19</div>
<div class="c l n" style="left:216.9px;top:699px">s000001</div>
<div class="c r" style="left:300px;top:699px;width:86.5px">999999</div>
<div class="c r" style="left:390px;top:699px;width:75.5px">7326</div>
<div class="c l" style="left:470.9px;top:699px">N</div>
<div class="c l" style="left:535.9px;top:699px">xxxweud35</div>
<div class="c r" style="left:626px;top:699px;width:101.8px">999999</div>
<div class="c r" style="left:730px;top:699px;width:114.5px">25000</div>
<div class="c l" style="left:30px;top:729px">–</div>
<div class="c l" style="left:30px;top:736px">–</div>
<div class="abs" style="left:298px;top:18px;width:93px;height:19px;box-sizing:border-box;border:3px solid #000;border-top:2px solid #0a1230"></div>
<div class="abs" style="left:386px;top:32px;width:7px;height:7px;background:#fff"></div>
<div class="abs" style="left:387px;top:33px;width:5px;height:5px;background:#000"></div>
</div>
<svg class="abs" style="left:0;top:0;pointer-events:none" width="970" height="888" viewBox="0 0 970 888">
<path d="M190.5 132 L207.3 123.5 L207.3 129.2 L245 129.2 L245 134.8 L207.3 134.8 L207.3 140.5 Z" fill="#f0400e"/>
<path d="M310.3 372 L327 363.6 L327 369.2 L365 369.2 L365 374.8 L327 374.8 L327 381 Z" fill="#f0400e"/>
<ellipse cx="461.3" cy="791.8" rx="48.5" ry="19.8" fill="none" stroke="#e8401a" stroke-width="2.5"/>
</svg>
</body></html>
